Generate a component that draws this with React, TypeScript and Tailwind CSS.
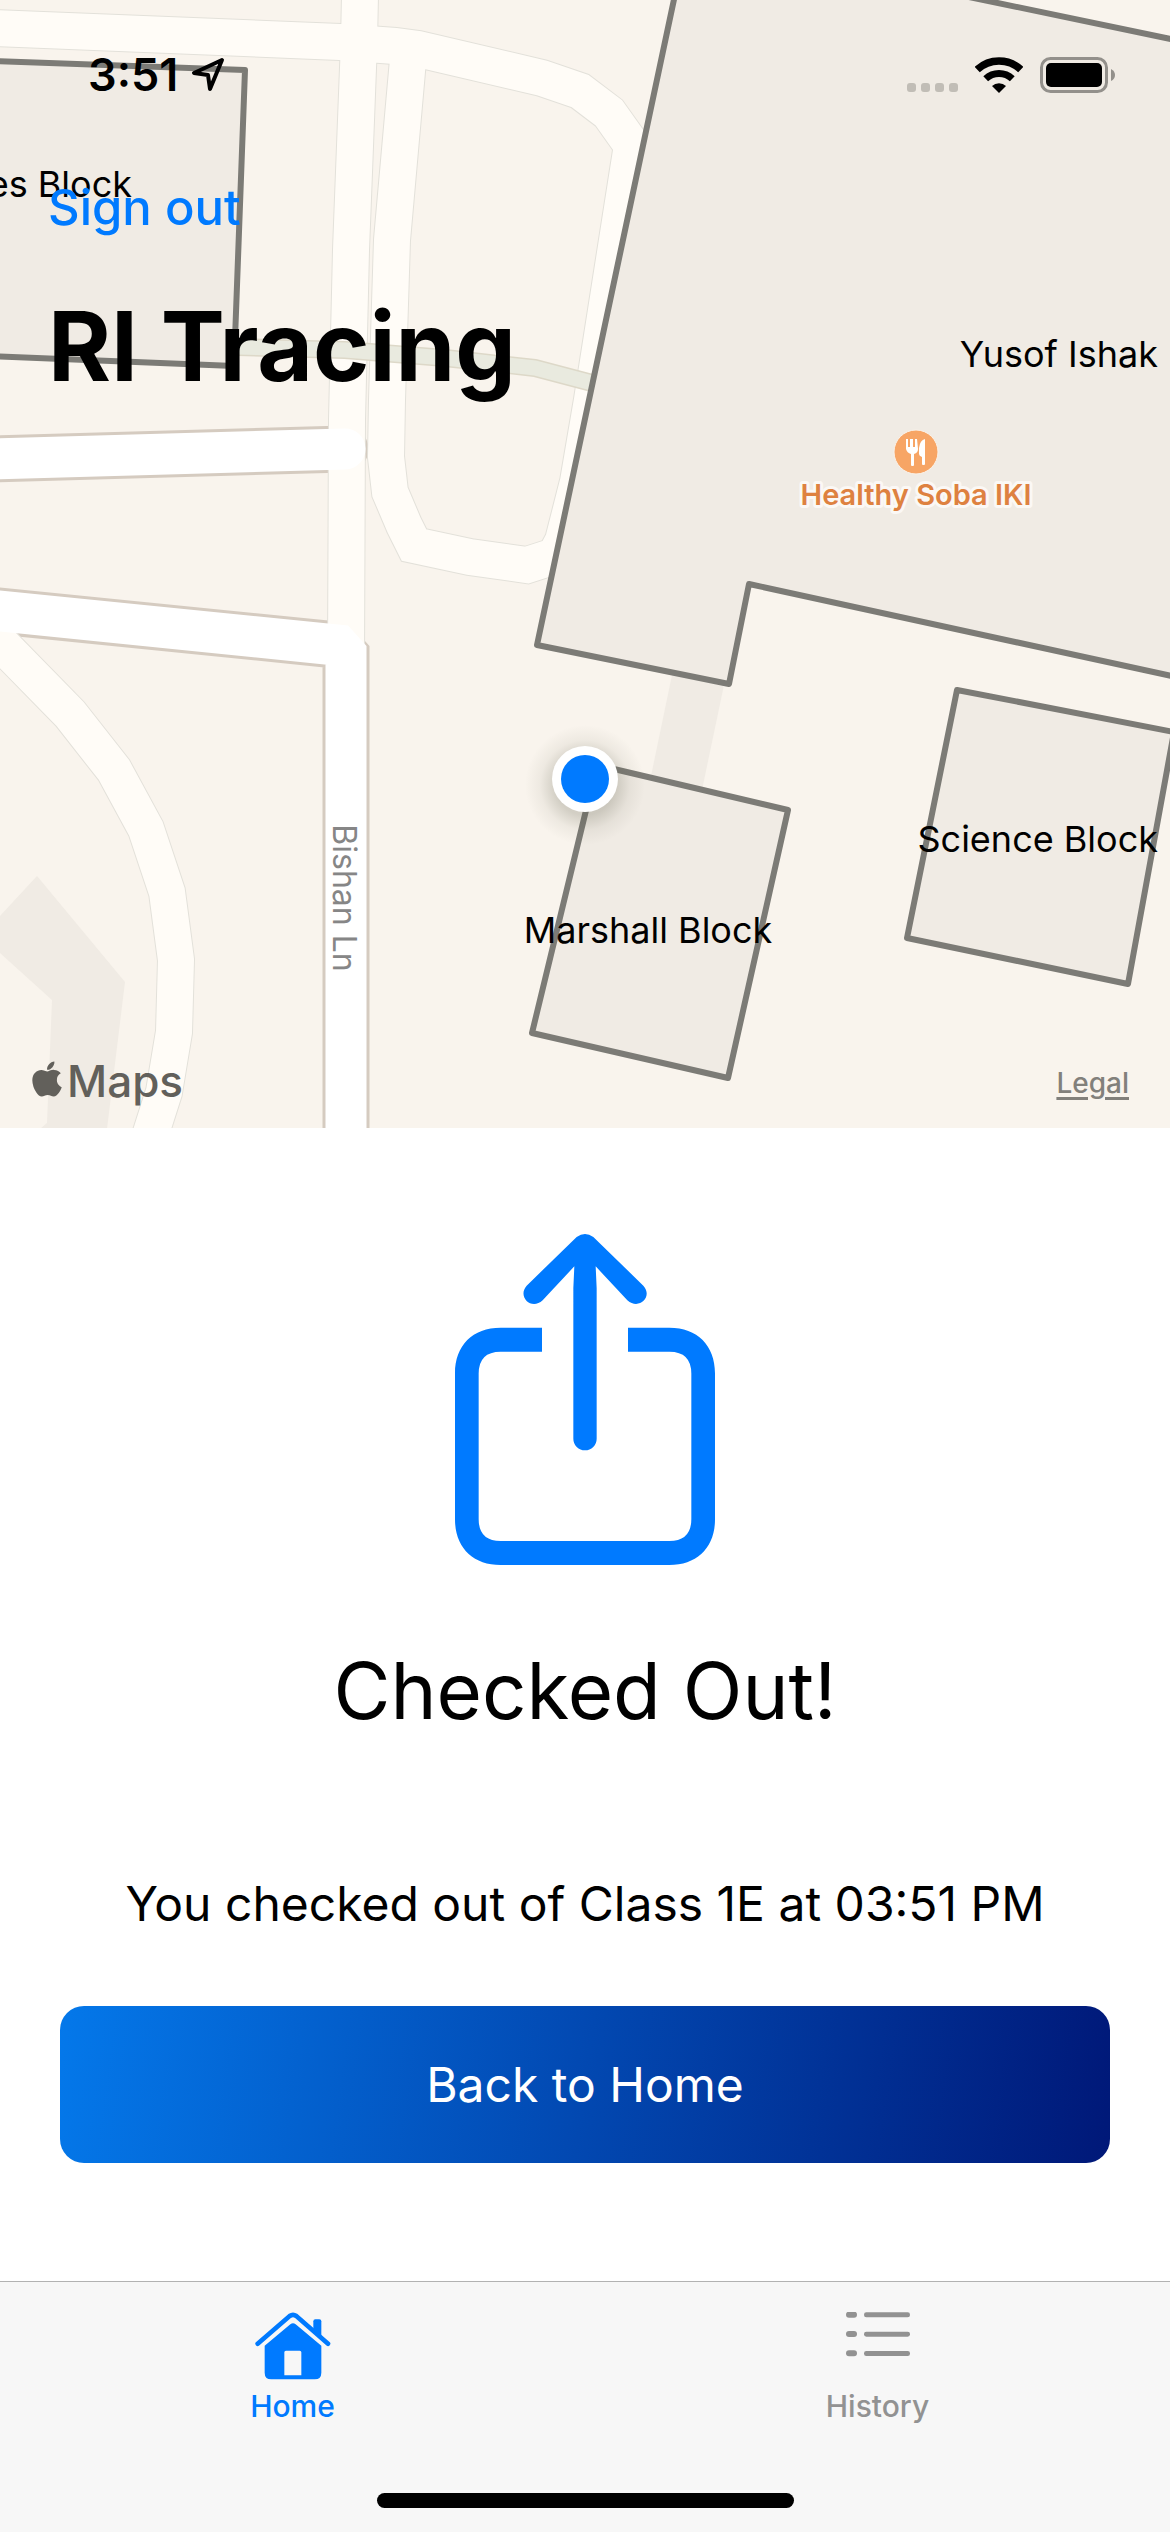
import { FaApple } from "react-icons/fa";

const PALE_ROADS = [
  "M-5 28 L340 42 L395 46 L418 49 L542 78 L580 91 L609 113 L631 144 L652 175",
  "M360 -5 L359 42 L351 250 L347 420 L346 660",
  "M408 60 L392 240 L387 400 L386 457 L390 492 L404 525 L414 545 L470 557 L527 565 L555 556 L563 541 L578 482 L592 400 L632 145",
  "M-20 622 L70 714 L114 770 L146 829 L167 892 L176 960 L174 1032 L164 1092 L150 1136",
];

const MAIN_ROADS = ["M-10 459 L345 449", "M-10 610 L346 646 L346 1140"];

const BUILDINGS = [
  "M-10 61 L245 70 L234 366 L-10 356 Z",
  "M676 -10 L537 645 L729 684 L749 584 L1190 680 L1190 43 L940 -9 Z",
  "M597 765 L788 810 L728 1078 L532 1033 Z",
  "M957 690 L1174 732 L1128 984 L907 938 Z",
];

function CampusMap() {
  return (
    <svg
      className="absolute inset-0 h-full w-full"
      viewBox="0 0 1170 1128"
      preserveAspectRatio="xMidYMid slice"
      role="img"
      aria-label="Map of campus"
    >
      <defs>
        <radialGradient id="dot-shadow">
          <stop offset="0.5" stopColor="#5a5a46" stopOpacity="0.24" />
          <stop offset="0.75" stopColor="#5a5a46" stopOpacity="0.07" />
          <stop offset="1" stopColor="#5a5a46" stopOpacity="0" />
        </radialGradient>
      </defs>
      <rect width="1170" height="1128" fill="#f9f4ed" />
      <path d="M0 916 L37 876 L125 982 L107 1129 L40 1129 L47 1123 L52 1000 L0 953 Z" fill="#f0ebe4" />
      <path d="M672 675 L724 685 L702 790 L651 776 Z" fill="#f0ebe4" />

      <g fill="none" strokeLinejoin="bevel">
        {MAIN_ROADS.map((d) => (
          <path key={d} d={d} stroke="#d5cbc0" strokeWidth="47" strokeLinecap="round" />
        ))}
        {PALE_ROADS.map((d) => (
          <path key={d} d={d} stroke="#e3e1da" strokeWidth="38" strokeLinejoin="miter" />
        ))}
        {PALE_ROADS.map((d) => (
          <path key={d} d={d} stroke="#fffcf7" strokeWidth="36" strokeLinejoin="miter" />
        ))}
        {MAIN_ROADS.map((d) => (
          <path key={d} d={d} stroke="#ffffff" strokeWidth="41" strokeLinecap="round" />
        ))}
        <path d="M238 347 L345 350 L445 358 L535 368 L592 383" stroke="#ddd8c8" strokeWidth="18" />
        <path d="M238 347 L345 350 L445 358 L535 368 L592 383" stroke="#e9eadf" strokeWidth="15" />
      </g>

      {BUILDINGS.map((d) => (
        <path key={d} d={d} fill="#f0ebe4" stroke="#7c7b76" strokeWidth="6" strokeLinejoin="round" />
      ))}

      <circle cx="916" cy="452" r="22" fill="#f7a565" stroke="#fbf3ea" strokeWidth="1" />
      <g fill="#ffffff">
        <path d="M906 439 h2 v8 h2 v-8 h3 v8 h2 v-8 h2 l1 10 q0 4 -4 5 v11 q0 1 -1 1 h-1 q-1 0 -1 -1 v-11 q-4 -1 -5 -5 Z" />
        <path d="M925 439 v25 q0 1 -1 1 h-1 q-1 0 -1 -1 v-7 q-3 -1 -3 -3 v-6 q1 -8 6 -9 Z" />
      </g>

      <g fontFamily="Inter, sans-serif" fontSize="36" fill="#000000">
        <text x="132" y="197" textAnchor="end">Humanities Block</text>
        <text x="1158" y="367" textAnchor="end">Yusof Ishak</text>
        <text x="1158" y="852" textAnchor="end">Science Block</text>
        <text x="648" y="943" textAnchor="middle">Marshall Block</text>
        <text
          x="916"
          y="505"
          textAnchor="middle"
          fontSize="29"
          fontWeight="600"
          fill="#de8140"
          stroke="#fbf8f5"
          strokeWidth="6"
          strokeLinejoin="round"
          paintOrder="stroke"
        >
          Healthy Soba IKI
        </text>
        <text transform="translate(333 898) rotate(90)" textAnchor="middle" fontSize="32" fill="#868686">
          Bishan Ln
        </text>
      </g>

      <circle cx="585" cy="785" r="60" fill="url(#dot-shadow)" />
      <circle cx="585" cy="779" r="33" fill="#ffffff" />
      <circle cx="585" cy="779" r="24" fill="#007aff" />
    </svg>
  );
}

function StatusBar() {
  return (
    <div className="flex h-[106px] items-center justify-between pt-11 pr-[55px] pl-[88px]">
      <div className="flex items-center gap-3">
        <span className="text-[45px] leading-[60px] font-semibold">3:51</span>
        <svg className="h-9 w-9" viewBox="0 0 36 36" fill="none" stroke="#000" strokeWidth="4" strokeLinejoin="round" aria-hidden="true">
          <path d="M32 3 L4 16 L18 18 L20 32 Z" />
        </svg>
      </div>
      <div className="flex items-center">
        <div className="mt-6 mr-[17px] flex gap-[5px]">
          <span className="size-[9px] rounded-[3px] bg-[#c1bdb6]" />
          <span className="size-[9px] rounded-[3px] bg-[#c1bdb6]" />
          <span className="size-[9px] rounded-[3px] bg-[#c1bdb6]" />
          <span className="size-[9px] rounded-[3px] bg-[#c1bdb6]" />
        </div>
        <svg className="mr-[17px] h-9 w-12" viewBox="0 0 48 36" fill="none" aria-hidden="true">
          <path d="M2.2 12.6 A32 32 0 0 1 45.8 12.6" stroke="#000" strokeWidth="7.5" />
          <path d="M10.7 21.7 A19.5 19.5 0 0 1 37.3 21.7" stroke="#000" strokeWidth="7" />
          <path d="M17 29 A10 10 0 0 1 31 29 L24 36 Z" fill="#000" />
        </svg>
        <svg className="h-9 w-[75px]" viewBox="0 0 75 36" aria-hidden="true">
          <rect x="1.5" y="1.5" width="65" height="33" rx="9" fill="none" stroke="#93908b" strokeWidth="3" />
          <rect x="6" y="6" width="56" height="24" rx="5" fill="#000" />
          <path d="M71 12 Q75 14 75 18 Q75 22 71 24 Z" fill="#93908b" />
        </svg>
      </div>
    </div>
  );
}

function ShareIcon() {
  return (
    <svg className="h-[331px] w-[260px]" viewBox="105 102 780 993" fill="#007aff" aria-hidden="true">
      <path d="M366 383 V455 H242 Q176 455 176 521 V957 Q176 1023 242 1023 H748 Q814 1023 814 957 V521 Q814 455 748 455 H624 V383 H748 C832 383 885 436 885 520 V958 C885 1042 832 1095 748 1095 H242 C158 1095 105 1042 105 958 V520 C105 436 158 383 242 383 Z" />
      <path d="M470 111 Q495 93 520 111 L670 257 C700 290 657 332 622 301 L527 199 L530 265 V716 A35 35 0 0 1 460 716 V265 L463 199 L368 301 C334 332 291 290 320 257 Z" />
    </svg>
  );
}

function HomeIcon() {
  return (
    <svg className="h-[68px] w-[76px]" viewBox="161 128 228 204" fill="#007aff" aria-hidden="true">
      <path d="M169 223 L265 140 Q275 133 285 140 L380 223" fill="none" stroke="#007aff" strokeWidth="14" strokeLinecap="round" />
      <path d="M336 156 Q336 150 342 150 H354 Q360 150 360 156 V204 L336 183 Z" />
      <path
        fillRule="evenodd"
        d="M190 229 L267 165 Q275 158 283 165 L360 229 V310 Q360 330 340 330 H210 Q190 330 190 310 Z M249 249 V318 H300 V249 Q300 244 295 244 H254 Q249 244 249 249 Z"
      />
    </svg>
  );
}

function HistoryIcon() {
  return (
    <svg className="h-[68px] w-16" viewBox="192 128 192 204" fill="#929292" aria-hidden="true">
      {[136, 194, 252].map((y) => (
        <g key={y}>
          <rect x="192" y={y - 9} width="33" height="18" rx="9" />
          <rect x="246" y={y - 7} width="138" height="15" rx="7" />
        </g>
      ))}
    </svg>
  );
}

export default function App() {
  return (
    <div className="flex min-h-screen flex-col bg-white font-[Inter,sans-serif] text-black">
      <header className="relative flex h-[1128px] flex-col overflow-hidden">
        <CampusMap />
        <div className="relative flex flex-1 flex-col">
          <StatusBar />
          <button type="button" className="mt-[70px] ml-12 self-start text-[49px] leading-[64px] font-medium text-[#007aff]">
            Sign out
          </button>
          <h1 className="mt-[46px] ml-12 text-[96px] leading-[120px] font-bold">RI Tracing</h1>
          <div className="mt-auto flex items-end justify-between pr-[41px] pb-[17px] pl-[27px]">
            <div className="flex items-center text-[#62605b]">
              <FaApple className="mb-1 size-10" aria-hidden="true" />
              <span className="text-[44px] leading-[60px] font-medium">Maps</span>
            </div>
            <a href="#legal" className="text-[28px] leading-[56px] font-medium text-[#82807b] underline decoration-3 underline-offset-4">
              Legal
            </a>
          </div>
        </div>
      </header>

      <main className="flex flex-1 flex-col items-center px-[60px] pt-[106px]">
        <ShareIcon />
        <h2 className="mt-[78px] text-[78px] leading-[96px]">Checked Out!</h2>
        <p className="mt-[133px] text-[48px] leading-[64px]">You checked out of Class 1E at 03:51 PM</p>
        <button
          type="button"
          className="mt-[70px] h-[157px] w-full rounded-3xl bg-linear-[98deg] from-[#0478ea] to-[#001878] text-[48px] leading-[64px] text-white"
        >
          Back to Home
        </button>
      </main>

      <nav className="flex flex-col items-center border-t border-[#b2b2b2] bg-[#f7f7f7] pt-[30px] pb-6">
        <div className="grid w-full grid-cols-2 text-[30px] leading-[36px] font-medium">
          <a href="#home" aria-current="page" className="flex flex-col items-center gap-2 text-[#007aff]">
            <HomeIcon />
            Home
          </a>
          <a href="#history" className="flex flex-col items-center gap-2 text-[#929292]">
            <HistoryIcon />
            History
          </a>
        </div>
        <div className="mt-[69px] h-[15px] w-[417px] rounded-full bg-black" />
      </nav>
    </div>
  );
}
